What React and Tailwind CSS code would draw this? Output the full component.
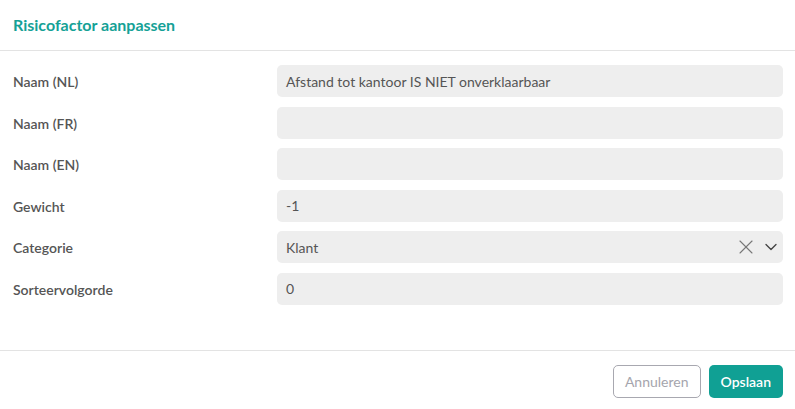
import { X, ChevronDown } from "lucide-react";

const fields = [
  { label: "Naam (NL)", value: "Afstand tot kantoor IS NIET onverklaarbaar" },
  { label: "Naam (FR)", value: "" },
  { label: "Naam (EN)", value: "" },
  { label: "Gewicht", value: "-1" },
  { label: "Categorie", value: "Klant", select: true },
  { label: "Sorteervolgorde", value: "0" },
];

export default function App() {
  return (
    <div className="w-[795px] h-[409px] bg-white flex flex-col text-[#4a4a4a]" style={{ fontFamily: "Lato, 'Noto Sans', sans-serif" }}>
      <div className="h-[51px] border-b border-[#e3e3e3] flex items-center px-[13px] shrink-0">
        <h2 className="text-[16px] font-bold text-[#15a196] leading-none">Risicofactor aanpassen</h2>
      </div>

      <div className="flex-1 flex flex-col gap-[9.6px] pt-[14px] pl-[13px] pr-[12px]">
        {fields.map((f) => (
          <div key={f.label} className="flex items-center h-8">
            <label className="w-[264px] shrink-0 text-[14px] font-semibold text-[#555] pt-[1px]">{f.label}</label>
            <div className="flex-1 h-8 rounded-[5px] bg-[#eeeeee] flex items-center pl-[9px] pr-[2px] text-[14px] text-[#555]">
              <span className="flex-1">{f.value}</span>
              {f.select && (
                <div className="flex items-center gap-[3px]">
                  <X size={24} strokeWidth={1.1} className="text-[#777]" />
                  <ChevronDown size={20} strokeWidth={1.6} className="text-[#444]" />
                </div>
              )}
            </div>
          </div>
        ))}
      </div>

      <div className="h-[59px] border-t border-[#e3e3e3] flex justify-end items-start gap-[8px] pt-[14px] pr-[12px] shrink-0">
        <button className="h-[33px] px-[11px] rounded-[5px] border border-[#a8a8b0] bg-white text-[14px] text-[#a5a5ad]">Annuleren</button>
        <button className="h-[33px] px-[12px] rounded-[5px] bg-[#10a094] text-white text-[14px] font-semibold">Opslaan</button>
      </div>
    </div>
  );
}
